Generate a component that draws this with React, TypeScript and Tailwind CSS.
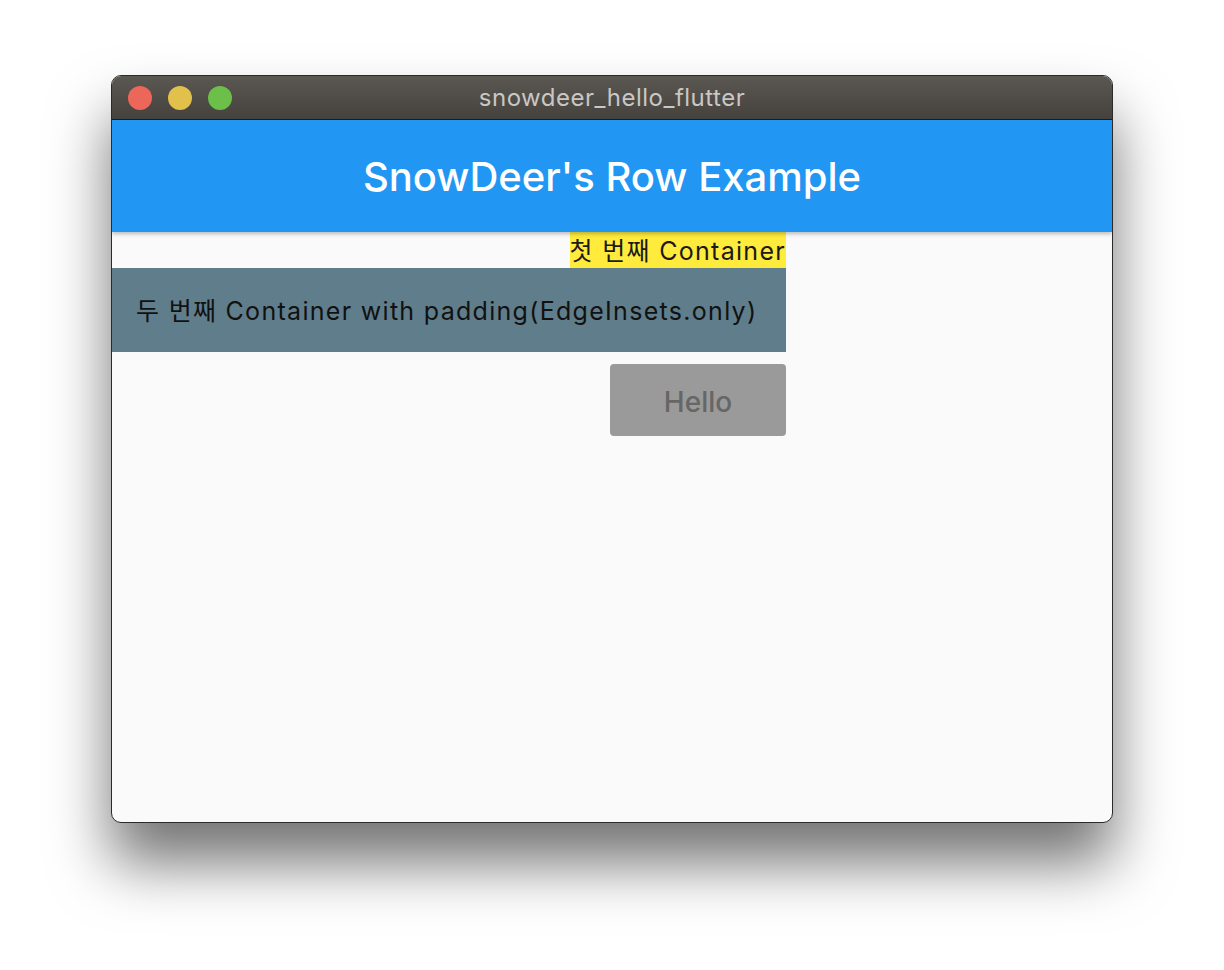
export default function App() {
  return (
    <div className="w-[1224px] h-[970px] bg-white pt-[75px] pl-[111px] font-['Inter','Noto_Sans_CJK_KR',sans-serif]">
      <div className="w-[1002px] h-[748px] flex flex-col rounded-[10px] border border-[#2a2a2a] bg-[#fafafa] overflow-hidden shadow-[0_40px_60px_rgba(0,0,0,0.55)]">
        {/* title bar */}
        <div className="relative h-[44px] shrink-0 flex items-center bg-gradient-to-b from-[#5b5751] to-[#45423e] border-b border-[#1f1e1c]">
          <div className="flex items-center gap-[16px] pl-[16px]">
            <span className="w-[24px] h-[24px] rounded-full bg-[#ec675a]" />
            <span className="w-[24px] h-[24px] rounded-full bg-[#e1c04c]" />
            <span className="w-[24px] h-[24px] rounded-full bg-[#6cbf48]" />
          </div>
          <div className="absolute inset-0 flex items-center justify-center text-[24px] tracking-[0.5px] text-[#c9c7c4]">
            snowdeer_hello_flutter
          </div>
        </div>
        {/* app bar */}
        <div className="h-[112px] shrink-0 flex items-center justify-center pt-[2px] bg-[#2196f3] shadow-[0_2px_4px_rgba(0,0,0,0.25)] z-10">
          <span className="text-[40px] font-medium text-white leading-none">SnowDeer's Row Example</span>
        </div>
        {/* body */}
        <div className="flex flex-col items-end w-[674px]">
          <div className="bg-[#ffeb3b] h-[36px] flex items-center pt-[3px] text-[25px] tracking-[1.3px] text-[#1a1a1a] whitespace-nowrap">첫 번째 Container</div>
          <div className="bg-[#607d8b] w-full h-[84px] flex items-center pt-[3px] px-[24px] text-[25px] tracking-[1.3px] text-[#111] whitespace-nowrap">
            두 번째 Container with padding(EdgeInsets.only)
          </div>
          <button className="mt-[12px] w-[176px] h-[72px] pt-[4px] rounded-[4px] bg-[#9a9a9a] text-[28px] font-medium text-[#666]">
            Hello
          </button>
        </div>
      </div>
    </div>
  );
}
